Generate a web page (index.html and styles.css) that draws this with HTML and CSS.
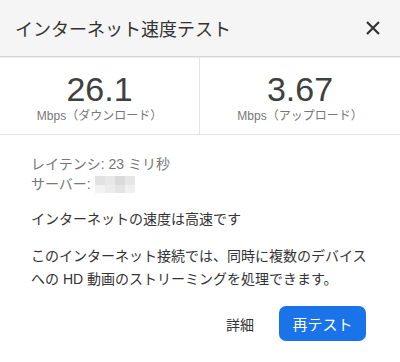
FILE: index.html
```html
<!DOCTYPE html>
<html lang="ja">
<head>
<meta charset="utf-8">
<link rel="stylesheet" href="styles.css">
</head>
<body>
<div class="dialog">
  <div class="header">
    <div class="title">インターネット速度テスト</div>
    <svg class="close" width="14" height="14" viewBox="0 0 14 14"><path d="M1 1L13 13M13 1L1 13" stroke="#333" stroke-width="2.2" fill="none"/></svg>
  </div>
  <div class="metrics">
    <div class="metric">
      <div class="value">26.1</div>
      <div class="unit">Mbps（ダウンロード）</div>
    </div>
    <div class="metric">
      <div class="value">3.67</div>
      <div class="unit">Mbps（アップロード）</div>
    </div>
  </div>
  <div class="body">
    <div class="info">
      <div class="line">レイテンシ: 23 ミリ秒</div>
      <div class="line">サーバー: <span class="blur"><i></i><i></i><i></i><i></i><i></i><i></i><i></i><i></i></span></div>
    </div>
    <p class="status">インターネットの速度は高速です</p>
    <p class="desc">このインターネット接続では、同時に複数のデバイスへの HD 動画のストリーミングを処理できます。</p>
  </div>
  <div class="actions">
    <span class="link">詳細</span>
    <span class="btn">再テスト</span>
  </div>
</div>
</body>
</html>
```
FILE: styles.css
```css
html, body {
  margin: 0;
  padding: 0;
  background: #fff;
}
body {
  font-family: "Liberation Sans", "Noto Sans CJK JP", sans-serif;
  color: #333;
}
.dialog {
  width: 400px;
  height: 362px;
  display: flex;
  flex-direction: column;
}
.header {
  height: 56px;
  background: #f5f5f5;
  border-bottom: 1px solid #d6d6d6;
  box-shadow: 0 1px 1px #eee;
  display: flex;
  align-items: center;
  justify-content: space-between;
  padding: 0 20px 0 15px;
  box-sizing: content-box;
}
.title {
  font-size: 18px;
  line-height: 24px;
  color: #333;
  padding-top: 3px;
}
.close {
  display: block;
}
.metrics {
  display: grid;
  grid-template-columns: 1fr 1fr;
  height: 77px;
  border-bottom: 1px solid #e4e4e4;
}
.metric {
  display: flex;
  flex-direction: column;
  align-items: center;
  padding-top: 14px;
}
.metric:first-child {
  border-right: 1px solid #e4e4e4;
}
.value {
  font-size: 34px;
  line-height: 36px;
  color: #404040;
}
.unit {
  font-size: 12px;
  line-height: 16px;
  color: #777;
  margin-top: 1px;
}
.body {
  padding: 19px 30px 0 31px;
  font-size: 14px;
}
.info {
  color: #777;
  line-height: 20px;
}
.line {
  display: flex;
  align-items: center;
}
.blur {
  display: inline-grid;
  grid-template-columns: repeat(4, 10px);
  grid-template-rows: 9px 8px;
  margin-left: 4px;
}
.blur i:nth-child(1) { background: #e2e2e2; }
.blur i:nth-child(2) { background: #e8e8e8; }
.blur i:nth-child(3) { background: #dadada; }
.blur i:nth-child(4) { background: #e6e6e6; }
.blur i:nth-child(5) { background: #f2f2f2; }
.blur i:nth-child(6) { background: #ececec; }
.blur i:nth-child(7) { background: #e4e4e4; }
.blur i:nth-child(8) { background: #f0f0f0; }
.status {
  margin: 15px 0 0;
  line-height: 20px;
  color: #333;
}
.desc {
  margin: 16px 0 0;
  line-height: 23px;
  color: #333;
}
.actions {
  display: flex;
  justify-content: flex-end;
  align-items: center;
  gap: 25px;
  padding: 15px 34px 0 0;
}
.link {
  font-size: 14px;
  color: #333;
}
.btn {
  width: 87px;
  height: 35px;
  border-radius: 7px;
  background: #1a73e8;
  color: #fff;
  font-size: 15px;
  display: flex;
  align-items: center;
  justify-content: center;
}
```
